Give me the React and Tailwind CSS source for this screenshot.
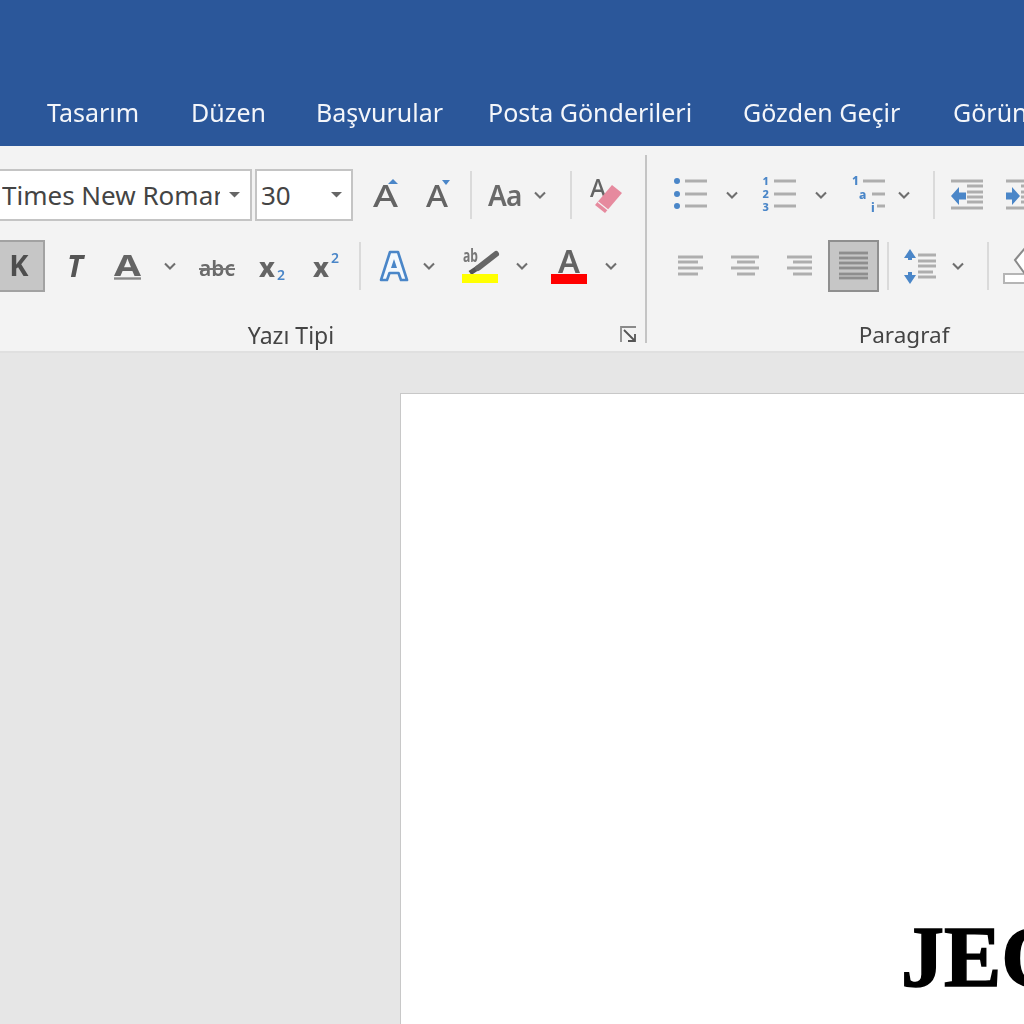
const UI = "font-['Noto_Sans','Open_Sans',sans-serif]";
const GF = "Noto Sans, Open Sans, sans-serif";
const GR = "#646464";
const LN = "#aeaeae";
const BL = "#4a86c8";

function Ic({ w, className = "", children }) {
  return (
    <svg width={w} height={52} viewBox={`0 0 ${w} 52`} className={`shrink-0 ${className}`}>
      {children}
    </svg>
  );
}

function Chev({ className = "" }) {
  return (
    <Ic w={12} className={className}>
      <path d="M1 23.5 L6 28.5 L11 23.5" fill="none" stroke="#6e6e6e" strokeWidth="2.1" />
    </Ic>
  );
}

function Sep({ className = "" }) {
  return <div className={`w-[2px] h-[48px] shrink-0 bg-[#dadada] ${className}`} />;
}

function L({ x1, x2, y, c = LN, t = 3 }) {
  return <line x1={x1} x2={x2} y1={y} y2={y} stroke={c} strokeWidth={t} />;
}

function Letter({ x, y, s, c = GR, w = 600, i, tl, children }) {
  return (
    <text
      x={x}
      y={y}
      fontSize={s}
      fill={c}
      fontWeight={w}
      fontStyle={i ? "italic" : "normal"}
      fontFamily={GF}
      textLength={tl}
      lengthAdjust={tl ? "spacingAndGlyphs" : undefined}
    >
      {children}
    </text>
  );
}

function Row1Left() {
  return (
    <div className="flex items-center h-[52px] blur-[0.7px]">
      <div className="-ml-[8px] w-[260px] h-[52px] shrink-0 bg-white border-2 border-[#c4c4c4] flex items-center overflow-hidden">
        <div className="ml-[8px] w-[218px] overflow-hidden whitespace-nowrap text-[26px] leading-none text-[#444]">Times New Roman</div>
        <svg width="12" height="8" className="ml-[9px]"><path d="M0 1 H11 L5.5 6.5 Z" fill="#666" /></svg>
      </div>
      <div className="ml-[3px] w-[98px] h-[52px] shrink-0 bg-white border-2 border-[#c4c4c4] flex items-center">
        <div className="ml-[4px] w-[70px] text-[26px] leading-none text-[#444]">30</div>
        <svg width="12" height="8"><path d="M0 1 H11 L5.5 6.5 Z" fill="#666" /></svg>
      </div>
      <Ic w={30} className="ml-[17px]">
        <Letter x={3} y={38} s={30} w={500} tl={25}>A</Letter>
        <path d="M18 15 L23 10 L28 15 Z" fill={BL} />
      </Ic>
      <Ic w={30} className="ml-[22px]">
        <Letter x={4} y={38} s={30} w={500} tl={22}>A</Letter>
        <path d="M20 11 H28 L24 16 Z" fill={BL} />
      </Ic>
      <Sep className="ml-[18px]" />
      <div className="ml-[16px] w-[34px] text-[28px] leading-none font-semibold text-[#6a6a6a] tracking-tight">Aa</div>
      <Chev className="ml-[12px]" />
      <Sep className="ml-[24px]" />
      <Ic w={36} className="ml-[16px]">
        <Letter x={2} y={28} s={25} w={500} tl={16}>A</Letter>
        <path d="M7 36 L24 16 L34 24 L17 44 Z" fill="#e68a9e" />
        <path d="M10 33 L20 41" stroke="#f3f3f3" strokeWidth="1.2" />
      </Ic>
    </div>
  );
}

function Row2Left() {
  return (
    <div className="flex items-center h-[52px] mt-[19px] blur-[0.7px]">
      <div className="-ml-[8px] w-[53px] h-[52px] shrink-0 bg-[#c6c6c6] border-2 border-[#a2a2a2] flex items-center justify-center pl-[1px] pb-[3px] text-[29px] leading-none font-bold text-[#4e4e4e]">K</div>
      <div className="ml-[18px] w-[24px] text-center text-[30px] leading-none font-bold italic text-[#555]">T</div>
      <Ic w={32} className="ml-[25px]">
        <Letter x={2} y={36} s={29} w={700} tl={27}>A</Letter>
        <L x1={2} x2={29} y={38.5} c="#888" t={2.4} />
      </Ic>
      <Chev className="ml-[20px]" />
      <Ic w={40} className="ml-[21px]">
        <Letter x={2} y={36} s={21} w={600} c="#6a6a6a" tl={36}>abc</Letter>
        <L x1={2} x2={38} y={29} c="#777" t={2} />
      </Ic>
      <Ic w={30} className="ml-[20px]">
        <Letter x={2} y={37} s={26} w={800} tl={16}>x</Letter>
        <Letter x={20} y={40} s={14} c={BL}>2</Letter>
      </Ic>
      <Ic w={30} className="ml-[24px]">
        <Letter x={2} y={37} s={26} w={800} tl={16}>x</Letter>
        <Letter x={20} y={23} s={14} c={BL}>2</Letter>
      </Ic>
      <Sep className="ml-[18px]" />
      <Ic w={32} className="ml-[17px]">
        <path d="M3 40 L12 12 H20 L29 40 H23 L20.5 33 H11.5 L9 40 Z" fill="#f5f9fd" stroke={BL} strokeWidth="2.6" strokeLinejoin="round" />
        <path d="M13 28 L16 19 L19 28 Z" fill={BL} />
      </Ic>
      <Chev className="ml-[13px]" />
      <Ic w={40} className="ml-[25px]">
        <Letter x={3} y={22} s={18} w={700} c="#777" tl={15}>ab</Letter>
        <path d="M10 33 L19 27" stroke="#555" strokeWidth="5" />
        <path d="M18 28 L36 14" stroke="#666" strokeWidth="6" strokeLinecap="round" />
        <rect x={2} y={34} width={36} height={9} fill="#ffff00" />
      </Ic>
      <Chev className="ml-[16px]" />
      <Ic w={40} className="ml-[21px]">
        <Letter x={9} y={33} s={33} w={600} tl={22}>A</Letter>
        <rect x={2} y={34} width={36} height={10} fill="#ff0000" />
      </Ic>
      <Chev className="ml-[16px]" />
    </div>
  );
}

function Row1Right() {
  return (
    <div className="flex items-center h-[52px] blur-[0.7px]">
      <Ic w={38} className="ml-[25px]">
        {[12, 25, 37].map((y) => <circle key={y} cx={5} cy={y} r={3} fill={BL} />)}
        {[12, 25, 37].map((y) => <L key={y} x1={13} x2={35} y={y} />)}
      </Ic>
      <Chev className="ml-[16px]" />
      <Ic w={38} className="ml-[22px]">
        {["1", "2", "3"].map((n, i) => <Letter key={n} x={2.5} y={16 + i * 13} s={11} c={BL} w={800}>{n}</Letter>)}
        {[12, 25, 37].map((y) => <L key={y} x1={14} x2={36} y={y} />)}
      </Ic>
      <Chev className="ml-[17px]" />
      <Ic w={38} className="ml-[23px]">
        <Letter x={2} y={16} s={12} c={BL} w={800}>1</Letter>
        <L x1={13} x2={35} y={12} />
        <Letter x={9} y={30} s={12} c={BL} w={800}>a</Letter>
        <L x1={22} x2={35} y={25} />
        <Letter x={21} y={43} s={12} c={BL} w={800}>i</Letter>
        <L x1={27} x2={35} y={37} />
      </Ic>
      <Chev className="ml-[10px]" />
      <Sep className="ml-[23px]" />
      <Ic w={36} className="ml-[14px]">
        <L x1={2} x2={34} y={12} />
        <L x1={2} x2={34} y={39} />
        {[17, 23, 28, 33].map((y) => <L key={y} x1={18} x2={34} y={y} />)}
        <path d="M2 27 L10 18 V23.5 H17 V30.5 H10 V36 Z" fill={BL} />
      </Ic>
      <Ic w={40} className="ml-[18px]">
        <L x1={3} x2={40} y={12} />
        <L x1={3} x2={40} y={39} />
        {[17, 23, 28, 33].map((y) => <L key={y} x1={18} x2={40} y={y} />)}
        <path d="M17 27 L9 18 V23.5 H3 V30.5 H9 V36 Z" fill={BL} />
      </Ic>
    </div>
  );
}

function Row2Right() {
  const ys = [17, 22, 28, 34];
  return (
    <div className="flex items-center h-[52px] mt-[19px] blur-[0.7px]">
      <Ic w={30} className="ml-[29px]">
        {ys.map((y, i) => <L key={y} x1={2} x2={i % 2 ? 22 : 27} y={y} />)}
      </Ic>
      <Ic w={32} className="ml-[23px]">
        {ys.map((y, i) => <L key={y} x1={i % 2 ? 8 : 2} x2={i % 2 ? 26 : 30} y={y} />)}
      </Ic>
      <Ic w={30} className="ml-[24px]">
        {ys.map((y, i) => <L key={y} x1={i % 2 ? 8 : 2} x2={27} y={y} />)}
      </Ic>
      <div className="ml-[13px] w-[51px] h-[52px] shrink-0 bg-[#c6c6c6] border-2 border-[#8f8f8f]">
        <svg width="47" height="48">
          {[11, 16, 21, 26, 32, 36].map((y) => <L key={y} x1={9} x2={38} y={y} c="#8e8e8e" t={2.8} />)}
        </svg>
      </div>
      <Sep className="ml-[8px]" />
      <Ic w={36} className="ml-[14px]">
        <path d="M7 20 V12 M7 32 V41" stroke={BL} strokeWidth="4" />
        <path d="M1 18 L7 9 L13 18 Z M1 35 L7 44 L13 35 Z" fill={BL} />
        <L x1={15} x2={33} y={15} />
        <L x1={15} x2={33} y={21} />
        <L x1={15} x2={33} y={26} />
        <L x1={15} x2={30} y={32} />
        <L x1={15} x2={33} y={37} />
      </Ic>
      <Chev className="ml-[13px]" />
      <Sep className="ml-[23px]" />
      <Ic w={30} className="ml-[12px]">
        <rect x={3} y={34} width={30} height={9} fill="#fff" stroke="#b5b5b5" strokeWidth="2" />
        <path d="M14 20 L24 8 L32 14 L32 34 L24 34 Z" fill="#fff" stroke="#8a8a8a" strokeWidth="2" />
      </Ic>
    </div>
  );
}

const tabs = [
  ["Tasarım", "w-[144px]"],
  ["Düzen", "w-[125px]"],
  ["Başvurular", "w-[172px]"],
  ["Posta Gönderileri", "w-[255px]"],
  ["Gözden Geçir", "w-[210px]"],
  ["Görünüm", "w-[120px]"],
];

export default function App() {
  return (
    <div className={`w-[1024px] h-[1024px] overflow-hidden flex flex-col bg-[#e6e6e6] ${UI}`}>
      <header className="h-[146px] shrink-0 bg-[#2b579a] flex items-end pb-[17px] pl-[47px] whitespace-nowrap text-[25px] leading-[34px] text-[#f4f6fa] blur-[0.5px]">
        {tabs.map(([t, w]) => (
          <span key={t} className={`shrink-0 ${w}`}>{t}</span>
        ))}
      </header>

      <section className="h-[207px] shrink-0 bg-[#f3f3f3] border-b-2 border-[#e0e0e0] flex items-start pt-[9px]">
        <div className="w-[647px] shrink-0 h-[188px] border-r-2 border-[#c4c4c4] pt-[14px]">
          <Row1Left />
          <Row2Left />
          <div className="flex items-center h-[26px] mt-[30px]">
            <div className="w-[582px] text-center text-[23px] leading-none text-[#444] blur-[0.5px]">Yazı Tipi</div>
            <svg width="18" height="18" className="ml-[38px] blur-[0.5px]">
              <path d="M1 16 V1 H16" fill="none" stroke="#8a8a8a" strokeWidth="1.8" />
              <path d="M4 4 L15 15 M8 15 H15 V8" fill="none" stroke="#555" strokeWidth="1.8" />
            </svg>
          </div>
        </div>
        <div className="w-[514px] shrink-0 pt-[14px]">
          <Row1Right />
          <Row2Right />
          <div className="h-[26px] mt-[30px] text-center text-[22.5px] leading-[26px] text-[#444] blur-[0.5px]">Paragraf</div>
        </div>
      </section>

      <main className="flex-1 min-h-0 pt-[40px] pl-[400px]">
        <div className="w-[800px] h-[800px] bg-white border-l border-t border-[#c8c8c8] pl-[500px] pt-[517px]">
          <div className="[font-family:'Liberation_Serif','Times_New_Roman',serif] font-bold text-[86px] leading-[92px] text-black whitespace-nowrap [-webkit-text-stroke:1.5px_black] blur-[0.4px]">JEC</div>
        </div>
      </main>
    </div>
  );
}
